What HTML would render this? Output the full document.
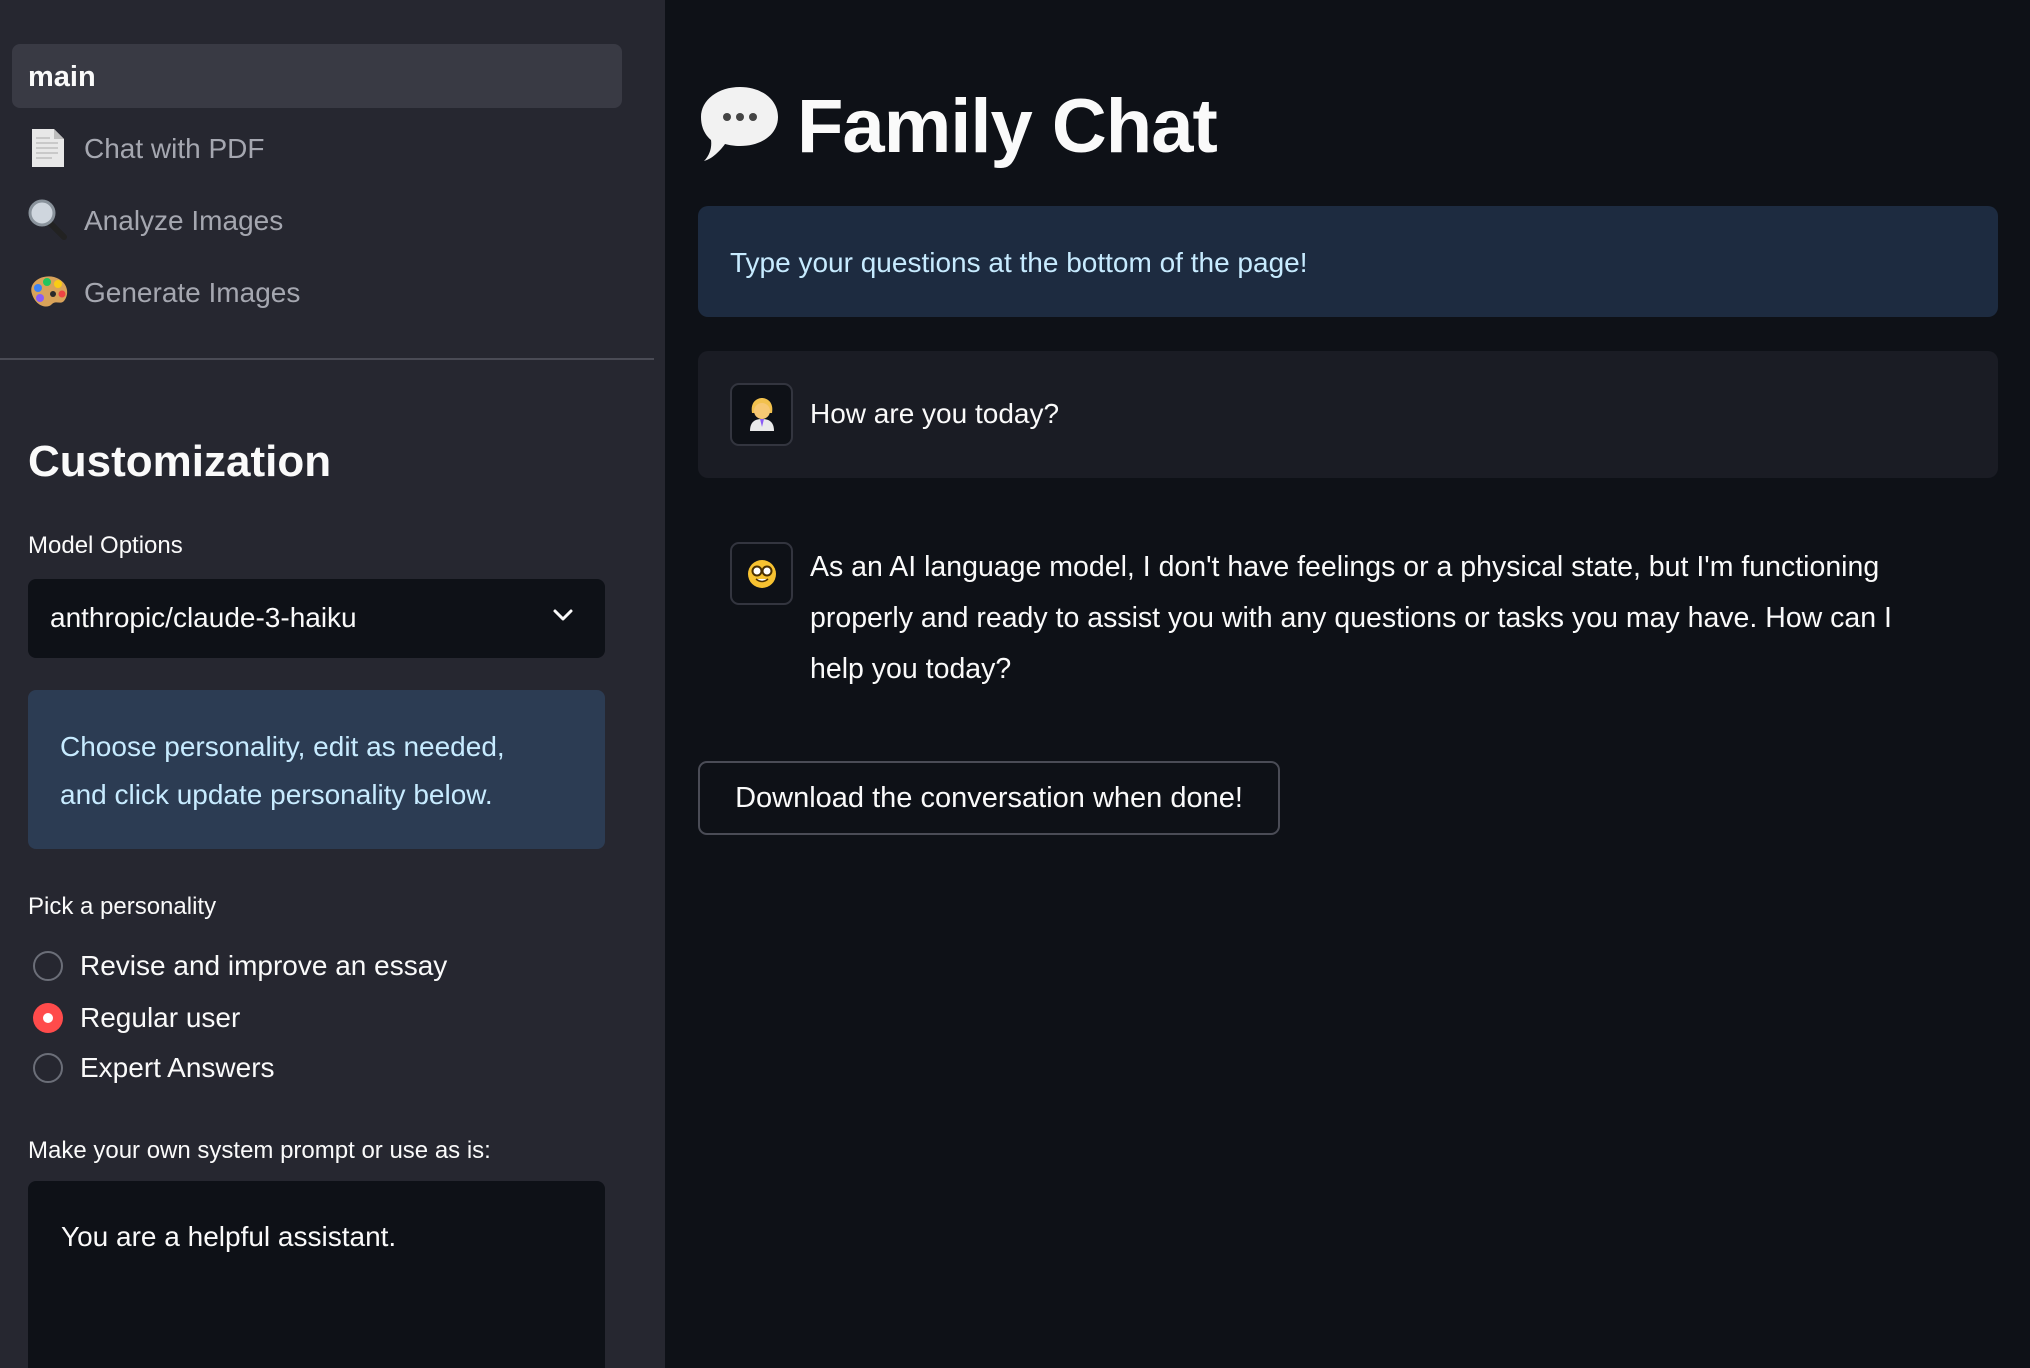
<!DOCTYPE html>
<html><head><meta charset="utf-8"><style>
*{margin:0;padding:0;box-sizing:border-box}
html,body{width:2030px;height:1368px;background:#0e1117;overflow:hidden}
body{font-family:"Liberation Sans",sans-serif;color:#fafafa;position:relative}
.sb{position:absolute;left:0;top:0;width:665px;height:1368px;background:#262730;overflow:hidden}
.a{position:absolute;white-space:nowrap}
.nav{font-size:28px;color:#a5a7b0;line-height:40px}
.t{font-size:28px;line-height:40px}
.lab{font-size:24px;line-height:34px;color:#fafafa}
.radio{position:absolute;width:30px;height:30px;border-radius:50%;border:2px solid #6b6e78;left:33px}
</style></head><body>
<div class="sb">
  <div class="a" style="left:12px;top:44px;width:610px;height:64px;background:#393a44;border-radius:8px"></div>
  <div class="a" style="left:28px;top:57px;font-size:29px;font-weight:bold;line-height:40px">main</div>
  <svg class="a" style="left:30px;top:128px" width="36" height="40" viewBox="0 0 36 40"><path d="M2 1H24L34 11V39H2Z" fill="#e8e8e8"/><path d="M24 1V11H34" fill="#bdbdbd"/><g stroke="#aaa" stroke-width="1"><line x1="6" y1="10" x2="20" y2="10"/><line x1="6" y1="15" x2="28" y2="15"/><line x1="6" y1="20" x2="28" y2="20"/><line x1="6" y1="25" x2="28" y2="25"/><line x1="6" y1="30" x2="22" y2="30"/></g></svg>
  <div class="a nav" style="left:84px;top:129px">Chat with PDF</div>
  <svg class="a" style="left:28px;top:199px" width="40" height="42" viewBox="0 0 40 42"><line x1="22" y1="24" x2="36" y2="38" stroke="#222" stroke-width="6" stroke-linecap="round"/><circle cx="14" cy="14" r="12" fill="#cfd6de" stroke="#8a939c" stroke-width="3"/></svg>
  <div class="a nav" style="left:84px;top:201px">Analyze Images</div>
  <svg class="a" style="left:28px;top:274px" width="42" height="38" viewBox="0 0 42 38"><path d="M4 20C0 8 14 0 26 3C40 7 42 20 36 27C32 31 28 26 24 30C20 35 8 33 4 20Z" fill="#d9a35a"/><circle cx="10" cy="14" r="4" fill="#3b82f6"/><circle cx="19" cy="8" r="4" fill="#22c55e"/><circle cx="30" cy="10" r="4" fill="#facc15"/><circle cx="34" cy="20" r="3.5" fill="#ef4444"/><circle cx="12" cy="24" r="4" fill="#8b5cf6"/><circle cx="25" cy="20" r="3" fill="#2a2a2a"/></svg>
  <div class="a nav" style="left:84px;top:273px">Generate Images</div>
  <div class="a" style="left:0;top:358px;width:654px;height:2px;background:#4a4b55"></div>
  <div class="a" style="left:28px;top:434px;font-size:44px;font-weight:bold;line-height:56px">Customization</div>
  <div class="a lab" style="left:28px;top:529px">Model Options</div>
  <div class="a" style="left:28px;top:579px;width:577px;height:79px;background:#0e1117;border-radius:8px"></div>
  <div class="a t" style="left:50px;top:598px">anthropic/claude-3-haiku</div>
  <svg class="a" style="left:552px;top:608px" width="22" height="14" viewBox="0 0 22 14"><path d="M3 3L11 11L19 3" fill="none" stroke="#fafafa" stroke-width="3" stroke-linecap="round" stroke-linejoin="round"/></svg>
  <div class="a" style="left:28px;top:690px;width:577px;height:159px;background:#2c3c53;border-radius:8px"></div>
  <div class="a t" style="left:60px;top:723px;color:#c7ebff;line-height:48px">Choose personality, edit as needed,<br>and click update personality below.</div>
  <div class="a lab" style="left:28px;top:890px">Pick a personality</div>
  <div class="radio" style="top:951px"></div>
  <div class="a t" style="left:80px;top:946px">Revise and improve an essay</div>
  <div class="radio" style="top:1003px;border:none;background:#ff4b4b"><div style="position:absolute;left:10px;top:10px;width:10px;height:10px;border-radius:50%;background:#fff"></div></div>
  <div class="a t" style="left:80px;top:998px">Regular user</div>
  <div class="radio" style="top:1053px"></div>
  <div class="a t" style="left:80px;top:1048px">Expert Answers</div>
  <div class="a lab" style="left:28px;top:1134px">Make your own system prompt or use as is:</div>
  <div class="a" style="left:28px;top:1181px;width:577px;height:187px;background:#0e1117;border-radius:8px 8px 0 0"></div>
  <div class="a t" style="left:61px;top:1217px">You are a helpful assistant.</div>
</div>

<svg class="a" style="left:698px;top:83px" width="84" height="82" viewBox="0 0 84 82"><path d="M42 4C64 4 80 17 80 34C80 51 64 63 42 63C36 63 31 62 27 61C22 68 14 76 6 78C12 72 14 64 13 57C6 51 3 43 3 34C3 17 20 4 42 4Z" fill="#f2f2f2"/><circle cx="29" cy="34" r="4" fill="#444"/><circle cx="42" cy="34" r="4" fill="#444"/><circle cx="55" cy="34" r="4" fill="#444"/></svg>
<div class="a" style="left:797px;top:82px;font-size:76px;font-weight:bold;line-height:90px;letter-spacing:-1px">Family Chat</div>

<div class="a" style="left:698px;top:206px;width:1300px;height:111px;background:#1d2b40;border-radius:10px"></div>
<div class="a t" style="left:730px;top:243px;color:#c7ebff">Type your questions at the bottom of the page!</div>

<div class="a" style="left:698px;top:351px;width:1300px;height:127px;background:#1a1c24;border-radius:10px"></div>
<div class="a" style="left:730px;top:383px;width:63px;height:63px;border:2px solid #33353f;border-radius:9px;background:#0e1117"></div>
<svg class="a" style="left:748px;top:397px" width="28" height="34" viewBox="0 0 28 34"><path d="M4 16C2 4 10 1 14 1C18 1 26 4 24 16Z" fill="#f2c14e"/><circle cx="14" cy="14" r="8" fill="#f7c873"/><path d="M2 34C2 24 8 22 14 22C20 22 26 24 26 34Z" fill="#eaeaea"/><path d="M12 22L14 30L16 22Z" fill="#8b5cf6"/></svg>
<div class="a t" style="left:810px;top:394px">How are you today?</div>

<div class="a" style="left:730px;top:542px;width:63px;height:63px;border:2px solid #33353f;border-radius:9px;background:#0e1117"></div>
<svg class="a" style="left:747px;top:559px" width="30" height="30" viewBox="0 0 30 30"><circle cx="15" cy="15" r="14" fill="#f7c231"/><circle cx="10" cy="12" r="4.5" fill="#fff" stroke="#4a3000" stroke-width="2"/><circle cx="20" cy="12" r="4.5" fill="#fff" stroke="#4a3000" stroke-width="2"/><path d="M9 20Q15 25 21 20" fill="#fff" stroke="#4a3000" stroke-width="1.5"/></svg>
<div class="a t" style="left:810px;top:542px;line-height:51px;font-size:28.5px">As an AI language model, I don't have feelings or a physical state, but I'm functioning<br>properly and ready to assist you with any questions or tasks you may have. How can I<br>help you today?</div>

<div class="a" style="left:698px;top:761px;width:582px;height:74px;border:2px solid #4a4c56;border-radius:9px"></div>
<div class="a t" style="left:698px;top:778px;width:582px;text-align:center;font-size:29px">Download the conversation when done!</div>
</body></html>
